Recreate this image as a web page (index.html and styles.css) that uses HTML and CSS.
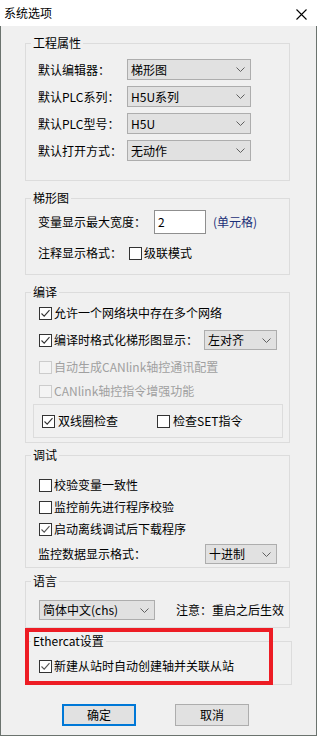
FILE: index.html
```html
<!DOCTYPE html>
<html lang="zh-CN">
<head>
    <meta charset="utf-8"/>
    <title>系统选项</title>
    <link rel="stylesheet" href="styles.css">
</head>
<body>
<div class="titlebar">
    <span class="title">系统选项</span>
    <svg class="close" width="11" height="11" viewBox="0 0 11 11">
        <path d="M0.5 0.5 L10.5 10.5 M10.5 0.5 L0.5 10.5" stroke="#000" stroke-width="1.1"/>
    </svg>
</div>

<div class="dialog">
    <fieldset class="group g-project">
        <legend>工程属性</legend>
        <div class="field">
            <span class="label w89">默认编辑器：</span>
            <div class="combo w124"><span>梯形图</span><svg class="arrow" width="9" height="5" viewBox="0 0 9 5"><path d="M0.5 0.5 L4.5 4.5 L8.5 0.5" fill="none" stroke="#606060"/></svg></div>
        </div>
        <div class="field">
            <span class="label w89">默认PLC系列：</span>
            <div class="combo w124"><span>H5U系列</span><svg class="arrow" width="9" height="5" viewBox="0 0 9 5"><path d="M0.5 0.5 L4.5 4.5 L8.5 0.5" fill="none" stroke="#606060"/></svg></div>
        </div>
        <div class="field">
            <span class="label w89">默认PLC型号：</span>
            <div class="combo w124"><span>H5U</span><svg class="arrow" width="9" height="5" viewBox="0 0 9 5"><path d="M0.5 0.5 L4.5 4.5 L8.5 0.5" fill="none" stroke="#606060"/></svg></div>
        </div>
        <div class="field">
            <span class="label w89">默认打开方式：</span>
            <div class="combo w124"><span>无动作</span><svg class="arrow" width="9" height="5" viewBox="0 0 9 5"><path d="M0.5 0.5 L4.5 4.5 L8.5 0.5" fill="none" stroke="#606060"/></svg></div>
        </div>
    </fieldset>

    <fieldset class="group g-ladder">
        <legend>梯形图</legend>
        <div class="field tall">
            <span class="label w116">变量显示最大宽度：</span>
            <div class="textbox">2</div>
            <span class="unit">(单元格)</span>
        </div>
        <div class="field row-20">
            <span class="label w91">注释显示格式：</span>
            <span class="check"></span>
            <span>级联模式</span>
        </div>
    </fieldset>

    <fieldset class="group g-compile">
        <legend>编译</legend>
        <div class="check-row r1">
            <span class="check on"><svg width="11" height="11" viewBox="0 0 11 11"><path d="M1.5 5.5 L4.2 8.2 L9.5 2.2" fill="none" stroke="#333" stroke-width="1.1"/></svg></span>
            <span>允许一个网络块中存在多个网络</span>
        </div>
        <div class="check-row r2">
            <span class="check on"><svg width="11" height="11" viewBox="0 0 11 11"><path d="M1.5 5.5 L4.2 8.2 L9.5 2.2" fill="none" stroke="#333" stroke-width="1.1"/></svg></span>
            <span>编译时格式化梯形图显示：</span>
            <div class="combo w73 push"><span>左对齐</span><svg class="arrow" width="9" height="5" viewBox="0 0 9 5"><path d="M0.5 0.5 L4.5 4.5 L8.5 0.5" fill="none" stroke="#606060"/></svg></div>
        </div>
        <div class="check-row r3 disabled">
            <span class="check"></span>
            <span>自动生成CANlink轴控通讯配置</span>
        </div>
        <div class="check-row r4 disabled">
            <span class="check"></span>
            <span>CANlink轴控指令增强功能</span>
        </div>
        <div class="subbox">
            <div class="check-row first">
                <span class="check on"><svg width="11" height="11" viewBox="0 0 11 11"><path d="M1.5 5.5 L4.2 8.2 L9.5 2.2" fill="none" stroke="#333" stroke-width="1.1"/></svg></span>
                <span>双线圈检查</span>
            </div>
            <div class="check-row">
                <span class="check"></span>
                <span>检查SET指令</span>
            </div>
        </div>
    </fieldset>

    <fieldset class="group g-debug">
        <legend>调试</legend>
        <div class="check-row tight">
            <span class="check"></span>
            <span>校验变量一致性</span>
        </div>
        <div class="check-row tight">
            <span class="check"></span>
            <span>监控前先进行程序校验</span>
        </div>
        <div class="check-row tight">
            <span class="check on"><svg width="11" height="11" viewBox="0 0 11 11"><path d="M1.5 5.5 L4.2 8.2 L9.5 2.2" fill="none" stroke="#555" stroke-width="1.1"/></svg></span>
            <span>启动离线调试后下载程序</span>
        </div>
        <div class="field row-20 monitor">
            <span class="label">监控数据显示格式：</span>
            <div class="combo w72 push"><span>十进制</span><svg class="arrow" width="9" height="5" viewBox="0 0 9 5"><path d="M0.5 0.5 L4.5 4.5 L8.5 0.5" fill="none" stroke="#606060"/></svg></div>
        </div>
    </fieldset>

    <fieldset class="group g-lang">
        <legend>语言</legend>
        <div class="field row-20 lang">
            <div class="combo w116"><span>简体中文(chs)</span><svg class="arrow" width="9" height="5" viewBox="0 0 9 5"><path d="M0.5 0.5 L4.5 4.5 L8.5 0.5" fill="none" stroke="#606060"/></svg></div>
            <span class="note">注意：重启之后生效</span>
        </div>
    </fieldset>

    <fieldset class="group g-ethercat">
        <legend>Ethercat设置</legend>
        <div class="check-row ecat">
            <span class="check on"><svg width="11" height="11" viewBox="0 0 11 11"><path d="M1.5 5.5 L4.2 8.2 L9.5 2.2" fill="none" stroke="#555" stroke-width="1.1"/></svg></span>
            <span>新建从站时自动创建轴并关联从站</span>
        </div>
    </fieldset>

    <div class="highlight"></div>

    <div class="buttons">
        <button class="btn default">确定</button>
        <button class="btn">取消</button>
    </div>
</div>
</body>
</html>
```

FILE: styles.css
```css
html, body {
    margin: 0;
    padding: 0;
}

body {
    width: 317px;
    height: 736px;
    overflow: hidden;
    background-color: #f0f0f0;
    font-family: "Noto Sans CJK SC", "Microsoft YaHei", sans-serif;
    font-size: 12px;
    line-height: 14px;
    color: #000;
}

.titlebar {
    height: 26px;
    background-color: #fff;
    display: flex;
    align-items: center;
    justify-content: space-between;
    padding: 0 10px 0 4px;
    box-sizing: border-box;
}

.title {
    font-size: 12px;
}

.close {
    display: block;
    margin-top: 2px;
}

.dialog {
    position: relative;
    height: 710px;
    box-sizing: border-box;
    border: 1px solid #6b736e;
    border-top: none;
    overflow: hidden;
}

/* group boxes */
.group {
    border: 1px solid #dcdcdc;
    margin: 0 26px 0 24px;
    padding: 0;
    min-width: 0;
}

.group legend {
    margin-left: 5px;
    padding: 0 2px;
    line-height: 14px;
}

.g-project {
    margin-top: 10px;
    padding: 9px 0 19px;
    display: flex;
    flex-direction: column;
    gap: 6px;
}

.g-ladder {
    margin-top: 10px;
    padding: 5px 0 11px;
}

.g-compile {
    margin-top: 10px;
    padding: 4px 0 4px;
}

.g-debug {
    margin-top: 5px;
    padding: 12px 0 3px;
}

.g-lang {
    margin-top: 6px;
    padding: 12px 0 7px;
}

.g-ethercat {
    margin-top: 6px;
    margin-right: 24px;
    padding: 8px 0 8px;
}

/* rows */
.field {
    display: flex;
    align-items: center;
    height: 21px;
    padding: 0 12px;
    white-space: nowrap;
}

.field.tall {
    height: 24px;
}

.field.row-20 {
    height: 20px;
}

.g-ladder .row-20 {
    margin-top: 9px;
}

.label {
    white-space: nowrap;
    flex-shrink: 0;
}

.w89 { width: 89px; }
.w91 { width: 91px; }
.w116 { width: 116px; }

.textbox {
    width: 52px;
    height: 24px;
    box-sizing: border-box;
    border: 1px solid #8f8f8f;
    background-color: #fff;
    padding: 4px 0 0 3px;
    line-height: 14px;
}

.unit {
    margin-left: 7px;
    color: #1c2f78;
}

.combo {
    display: flex;
    align-items: center;
    justify-content: space-between;
    height: 100%;
    box-sizing: border-box;
    background-color: #e1e1e1;
    border: 1px solid #adadad;
    padding: 0 5px 0 3px;
    white-space: nowrap;
    flex-shrink: 0;
}

.combo .arrow {
    display: block;
}

.w124 { width: 124px; }
.w116.combo { width: 116px; }
.w73 { width: 73px; }
.w72 { width: 72px; }

.push {
    margin-left: auto;
}

/* checkboxes */
.check-row {
    display: flex;
    align-items: center;
    gap: 2px;
    height: 20px;
    padding: 0 12px 0 13px;
    white-space: nowrap;
}

.check {
    width: 13px;
    height: 13px;
    box-sizing: border-box;
    border: 1px solid #333;
    background-color: #fff;
    display: inline-flex;
    align-items: center;
    justify-content: center;
    flex-shrink: 0;
}

.check svg {
    display: block;
}

.field .check {
    margin-right: 2px;
}

.disabled {
    color: #a0a0a0;
}

.disabled .check {
    border-color: #cccccc;
    background-color: #f4f4f4;
}

.g-compile .r2 {
    margin-top: 7px;
}

.g-compile .r3 {
    margin-top: 7px;
}

.g-compile .r4 {
    margin-top: 4px;
}

.subbox {
    display: flex;
    align-items: center;
    height: 34px;
    box-sizing: border-box;
    margin: 3px 6px 0 7px;
    border: 1px solid #dcdcdc;
    padding-left: 8px;
}

.subbox .check-row {
    padding: 0;
    gap: 3px;
}

.subbox .first {
    width: 115px;
}

.check-row.tight {
    height: 22px;
}

.monitor {
    margin-top: 4px;
}

.lang {
    padding-left: 13px;
    padding-right: 0;
}

.note {
    margin-left: 21px;
    white-space: nowrap;
    flex-shrink: 0;
}

.ecat {
    height: 20px;
}

/* red annotation box */
.highlight {
    position: absolute;
    left: 24px;
    top: 602px;
    width: 248px;
    height: 57px;
    box-sizing: border-box;
    border: 4px solid #ed1c24;
}

/* buttons */
.buttons {
    display: flex;
    gap: 39px;
    margin-top: 19px;
    padding-left: 61px;
}

.btn {
    width: 74px;
    height: 22px;
    box-sizing: border-box;
    background-color: #e1e1e1;
    border: 1px solid #adadad;
    font-family: inherit;
    font-size: 12px;
    line-height: 14px;
    padding: 0;
    color: #000;
}

.btn.default {
    border: 2px solid #0078d7;
}
```
